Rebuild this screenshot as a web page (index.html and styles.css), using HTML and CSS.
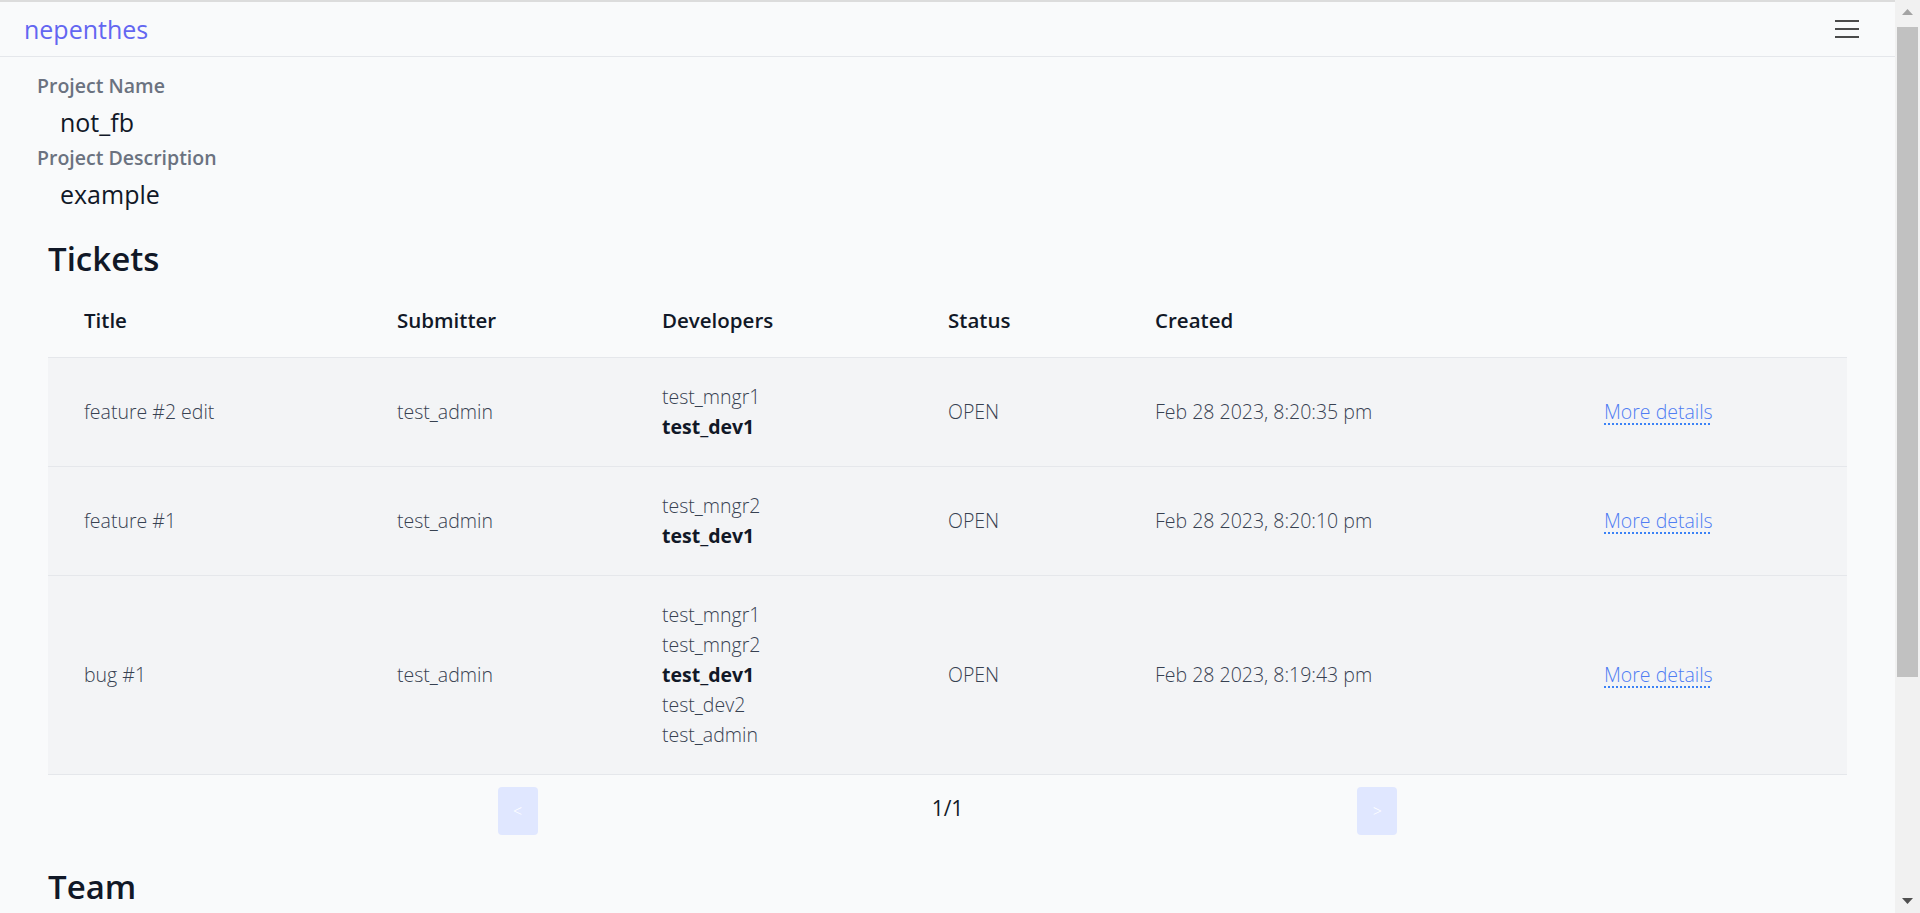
FILE: index.html
```html
<!DOCTYPE html>
<html lang="en">
<head>
<meta charset="utf-8">
<title>nepenthes</title>
<link rel="stylesheet" href="styles.css">
</head>
<body>
<header class="navbar">
  <a class="brand" href="#">nepenthes</a>
  <button class="menu-btn" aria-label="Menu">
    <svg width="24" height="18" viewBox="0 0 24 18"><path d="M0 1h24M0 9h24M0 17h24" stroke="#111" stroke-width="1.6" fill="none"/></svg>
  </button>
</header>
<main class="page">
  <section class="project">
    <div class="label">Project Name</div>
    <div class="value">not_fb</div>
    <div class="label">Project Description</div>
    <div class="value">example</div>
  </section>

  <section class="tickets">
    <h2 class="section-title">Tickets</h2>
    <table class="grid">
      <colgroup>
        <col class="c1"><col class="c2"><col class="c3"><col class="c4"><col class="c5"><col class="c6">
      </colgroup>
      <thead>
        <tr><th>Title</th><th>Submitter</th><th>Developers</th><th>Status</th><th>Created</th><th></th></tr>
      </thead>
      <tbody>
        <tr>
          <td>feature #2 edit</td>
          <td>test_admin</td>
          <td><div>test_mngr1</div><div class="me">test_dev1</div></td>
          <td>OPEN</td>
          <td>Feb 28 2023, 8:20:35 pm</td>
          <td><a class="details" href="#">More details</a></td>
        </tr>
        <tr>
          <td>feature #1</td>
          <td>test_admin</td>
          <td><div>test_mngr2</div><div class="me">test_dev1</div></td>
          <td>OPEN</td>
          <td>Feb 28 2023, 8:20:10 pm</td>
          <td><a class="details" href="#">More details</a></td>
        </tr>
        <tr>
          <td>bug #1</td>
          <td>test_admin</td>
          <td><div>test_mngr1</div><div>test_mngr2</div><div class="me">test_dev1</div><div>test_dev2</div><div>test_admin</div></td>
          <td>OPEN</td>
          <td>Feb 28 2023, 8:19:43 pm</td>
          <td><a class="details" href="#">More details</a></td>
        </tr>
      </tbody>
    </table>
    <div class="pager">
      <button class="pg-btn" disabled>&lt;</button>
      <span class="pg-count">1/1</span>
      <button class="pg-btn" disabled>&gt;</button>
    </div>
  </section>

  <section class="team">
    <h2 class="section-title">Team</h2>
    <table class="grid">
      <thead>
        <tr><th>Username</th><th>Role</th></tr>
      </thead>
      <tbody>
        <tr><td>test_admin</td><td>ADMIN</td></tr>
        <tr><td>test_mngr1</td><td>MANAGER</td></tr>
      </tbody>
    </table>
  </section>
</main>

<div class="scrollbar" aria-hidden="true">
  <div class="sb-btn">
    <svg width="25" height="25" viewBox="0 0 25 25"><path d="M7 15h11l-5.5-6z" fill="#a3a3a3"/></svg>
  </div>
  <div class="sb-track"><div class="sb-thumb"></div></div>
  <div class="sb-btn">
    <svg width="25" height="25" viewBox="0 0 25 25"><path d="M7 10h11l-5.5 6z" fill="#505050"/></svg>
  </div>
</div>
</body>
</html>
```

FILE: styles.css
```css
* { box-sizing: border-box; }

html, body {
  margin: 0;
  padding: 0;
}

body {
  background: #f9fafb;
  font-family: "Open Sans", "Noto Sans", sans-serif;
  color: #111827;
  border-top: 2px solid #dcdcdc;
  margin-right: 25px;
}

/* window scrollbar drawn over the viewport edge */
.scrollbar {
  position: fixed;
  top: 0;
  right: 0;
  width: 25px;
  height: 100vh;
  background: #f1f1f1;
  display: flex;
  flex-direction: column;
}

.sb-btn {
  height: 25px;
  flex: none;
  display: flex;
}

.sb-track {
  flex: 1;
  padding: 2px 2px 0 2px;
}

.sb-thumb {
  height: 650px;
  background: #c1c1c1;
}

.navbar {
  height: 55px;
  display: flex;
  align-items: center;
  justify-content: space-between;
  padding: 0 36px 0 24px;
  border-bottom: 1px solid #e5e7eb;
}

.brand {
  color: #6366f1;
  font-size: 25px;
  font-weight: 400;
  text-decoration: none;
  line-height: 30px;
}

.menu-btn {
  background: none;
  border: 0;
  padding: 0;
  display: flex;
  width: 24px;
  height: 18px;
}

.page {
  padding: 13px 48px 70px 48px;
}

.label {
  margin-left: -11px;
  font-size: 19.5px;
  font-weight: 600;
  color: #6b7280;
  line-height: 32px;
}

.value {
  padding-left: 12px;
  font-size: 25px;
  color: #111827;
  line-height: 40px;
}

.section-title {
  margin: 25px 0 0 0;
  font-size: 33px;
  font-weight: 600;
  line-height: 40px;
  color: #111827;
}

.grid {
  width: 100%;
  border-collapse: collapse;
  table-layout: fixed;
}

.c1 { width: 313px; }
.c2 { width: 265px; }
.c3 { width: 286px; }
.c4 { width: 207px; }
.c5 { width: 449px; }

.grid th {
  text-align: left;
  font-size: 20.5px;
  font-weight: 600;
  color: #111827;
  padding: 26px 0 22px 36px;
  line-height: 30px;
  border-bottom: 1px solid #e5e7eb;
}

.grid td {
  background: #f3f4f6;
  font-size: 19.5px;
  font-weight: 300;
  color: #374151;
  padding: 24px 0 24px 36px;
  line-height: 30px;
  vertical-align: middle;
  border-bottom: 1px solid #e5e7eb;
}

.grid td .me {
  font-weight: 700;
  color: #111827;
}

.details {
  color: #4f7df3;
  text-decoration: underline dotted #3b82f6;
  text-decoration-thickness: 2px;
  text-underline-offset: 4px;
}

.pager {
  display: flex;
  justify-content: center;
  align-items: center;
  gap: 394px;
  margin-top: 12px;
}

.pg-btn {
  width: 40px;
  height: 48px;
  border: 0;
  border-radius: 4px;
  background: #e0e7ff;
  color: #ffffff;
  font-family: "Open Sans", sans-serif;
  font-size: 16px;
  font-weight: 300;
  padding: 0;
}

.pg-count {
  font-size: 21px;
  color: #111827;
  line-height: 30px;
  margin-top: -6px;
}

.team .section-title {
  margin-top: 32px;
}
```
